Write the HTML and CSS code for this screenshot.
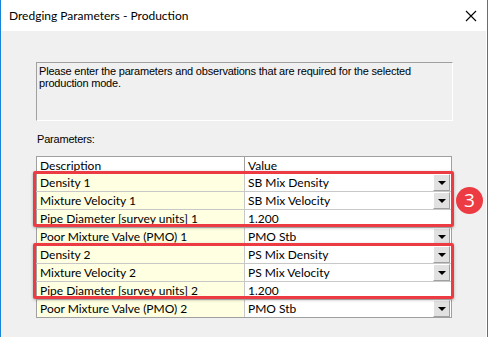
FILE: index.html
```html
<!DOCTYPE html>
<html lang="en">
<head>
    <meta charset="UTF-8">
    <title>Dredging Parameters - Production</title>
    <link rel="stylesheet" href="styles.css">
</head>
<body>
<div class="window">
    <div class="titlebar">
        <span class="title">Dredging Parameters - Production</span>
        <svg class="close" width="12" height="12" viewBox="0 0 12 12"><path d="M1 1L11 11M11 1L1 11" stroke="#000" stroke-width="1.1" fill="none"/></svg>
    </div>
    <div class="content">
        <div class="prompt">Please enter the parameters and observations that are required for the selected production mode.</div>
        <div class="label">Parameters:</div>
        <div class="gridWrap">
            <table class="grid">
                <tr class="head"><th>Description</th><th>Value</th></tr>
                <tr><td class="desc">Density 1</td><td class="val combo"><span>SB Mix Density</span><i class="drop"></i></td></tr>
                <tr><td class="desc">Mixture Velocity 1</td><td class="val combo"><span>SB Mix Velocity</span><i class="drop"></i></td></tr>
                <tr><td class="desc">Pipe Diameter [survey units] 1</td><td class="val"><span>1.200</span></td></tr>
                <tr><td class="desc">Poor Mixture Valve (PMO) 1</td><td class="val combo"><span>PMO Stb</span><i class="drop"></i></td></tr>
                <tr><td class="desc">Density 2</td><td class="val combo"><span>PS Mix Density</span><i class="drop"></i></td></tr>
                <tr><td class="desc">Mixture Velocity 2</td><td class="val combo"><span>PS Mix Velocity</span><i class="drop"></i></td></tr>
                <tr><td class="desc">Pipe Diameter [survey units] 2</td><td class="val"><span>1.200</span></td></tr>
                <tr><td class="desc">Poor Mixture Valve (PMO) 2</td><td class="val combo"><span>PMO Stb</span><i class="drop"></i></td></tr>
            </table>
            <div class="mark mark1"></div>
            <div class="mark mark2"></div>
            <div class="badge">3</div>
        </div>
    </div>
</div>
</body>
</html>
```
FILE: styles.css
```css
* {
    padding: 0;
    margin: 0;
    box-sizing: border-box;
}
body {
    background: #f0f0f0;
    font-family: "Liberation Sans", Arial, sans-serif;
}
.window {
    width: 488px;
    height: 337px;
    border-left: 1px solid #1883d7;
    border-right: 1px solid #1883d7;
    background: #f0f0f0;
    overflow: hidden;
}
.titlebar {
    height: 31px;
    background: #fff;
    display: flex;
    align-items: center;
    justify-content: space-between;
    padding: 0 10px 0 8px;
}
.title {
    font-family: Lato, "Liberation Sans", sans-serif;
    font-size: 12px;
    color: #000;
}
.close {
    display: block;
}
.content {
    height: 306px;
    border-right: 1px solid #fff;
    padding: 31px 0 0 35px;
}
.prompt {
    width: 417px;
    height: 59px;
    border-top: 1px solid #a0a0a0;
    border-left: 1px solid #a0a0a0;
    border-right: 1px solid #fff;
    border-bottom: 1px solid #fff;
    padding: 2px 2px;
    font-size: 11px;
    line-height: 12px;
    letter-spacing: -0.2px;
    color: #000;
}
.label {
    font-size: 11px;
    line-height: 13px;
    letter-spacing: -0.2px;
    margin: 12px 0 0 1px;
    height: 23px;
}
.gridWrap {
    position: relative;
    width: 416px;
}
.grid {
    width: 416px;
    border-collapse: collapse;
    table-layout: fixed;
    font-family: Lato, "Liberation Sans", sans-serif;
    font-size: 12px;
    color: #000;
}
.grid th, .grid td {
    text-align: left;
    font-weight: normal;
    border: 1px solid #a0a0a0;
    padding: 0 0 0 3px;
    white-space: nowrap;
    overflow: hidden;
}
.grid th {
    height: 17px;
    background: #fff;
    line-height: 15px;
}
.grid th:first-child {
    width: 208px;
}
.grid td {
    height: 18px;
    line-height: 16px;
    border-color: #c8c8c8;
}
.grid .desc {
    background: #ffffe1;
    border-left-color: #a0a0a0;
}
.grid .val {
    background: #fff;
    border-right-color: #a0a0a0;
    position: relative;
}
.grid tr:last-child td {
    border-bottom-color: #a0a0a0;
}
.drop {
    position: absolute;
    right: 1px;
    top: 0;
    width: 17px;
    height: 17px;
    background: #e1e1e1;
    border-right: 1px solid #a0a0a0;
    border-bottom: 1px solid #a0a0a0;
    border-top: 1px solid #fff;
    border-left: 1px solid #fff;
}
.drop::after {
    content: "";
    position: absolute;
    left: 4px;
    top: 6px;
    border-left: 4px solid transparent;
    border-right: 4px solid transparent;
    border-top: 4px solid #000;
}
.mark {
    position: absolute;
    left: -3px;
    width: 421px;
    height: 56px;
    border: 3px solid #ec3b42;
    border-radius: 2px;
    box-shadow: 0 1px 3px rgba(0, 0, 0, 0.3);
}
.mark1 {
    top: 15px;
}
.mark2 {
    top: 87px;
}
.badge {
    position: absolute;
    left: 420px;
    top: 31px;
    width: 27px;
    height: 27px;
    border-radius: 50%;
    background: #ec3b42;
    color: #fff;
    font-family: "Open Sans", "Liberation Sans", sans-serif;
    font-size: 19px;
    line-height: 27px;
    text-align: center;
}
```
